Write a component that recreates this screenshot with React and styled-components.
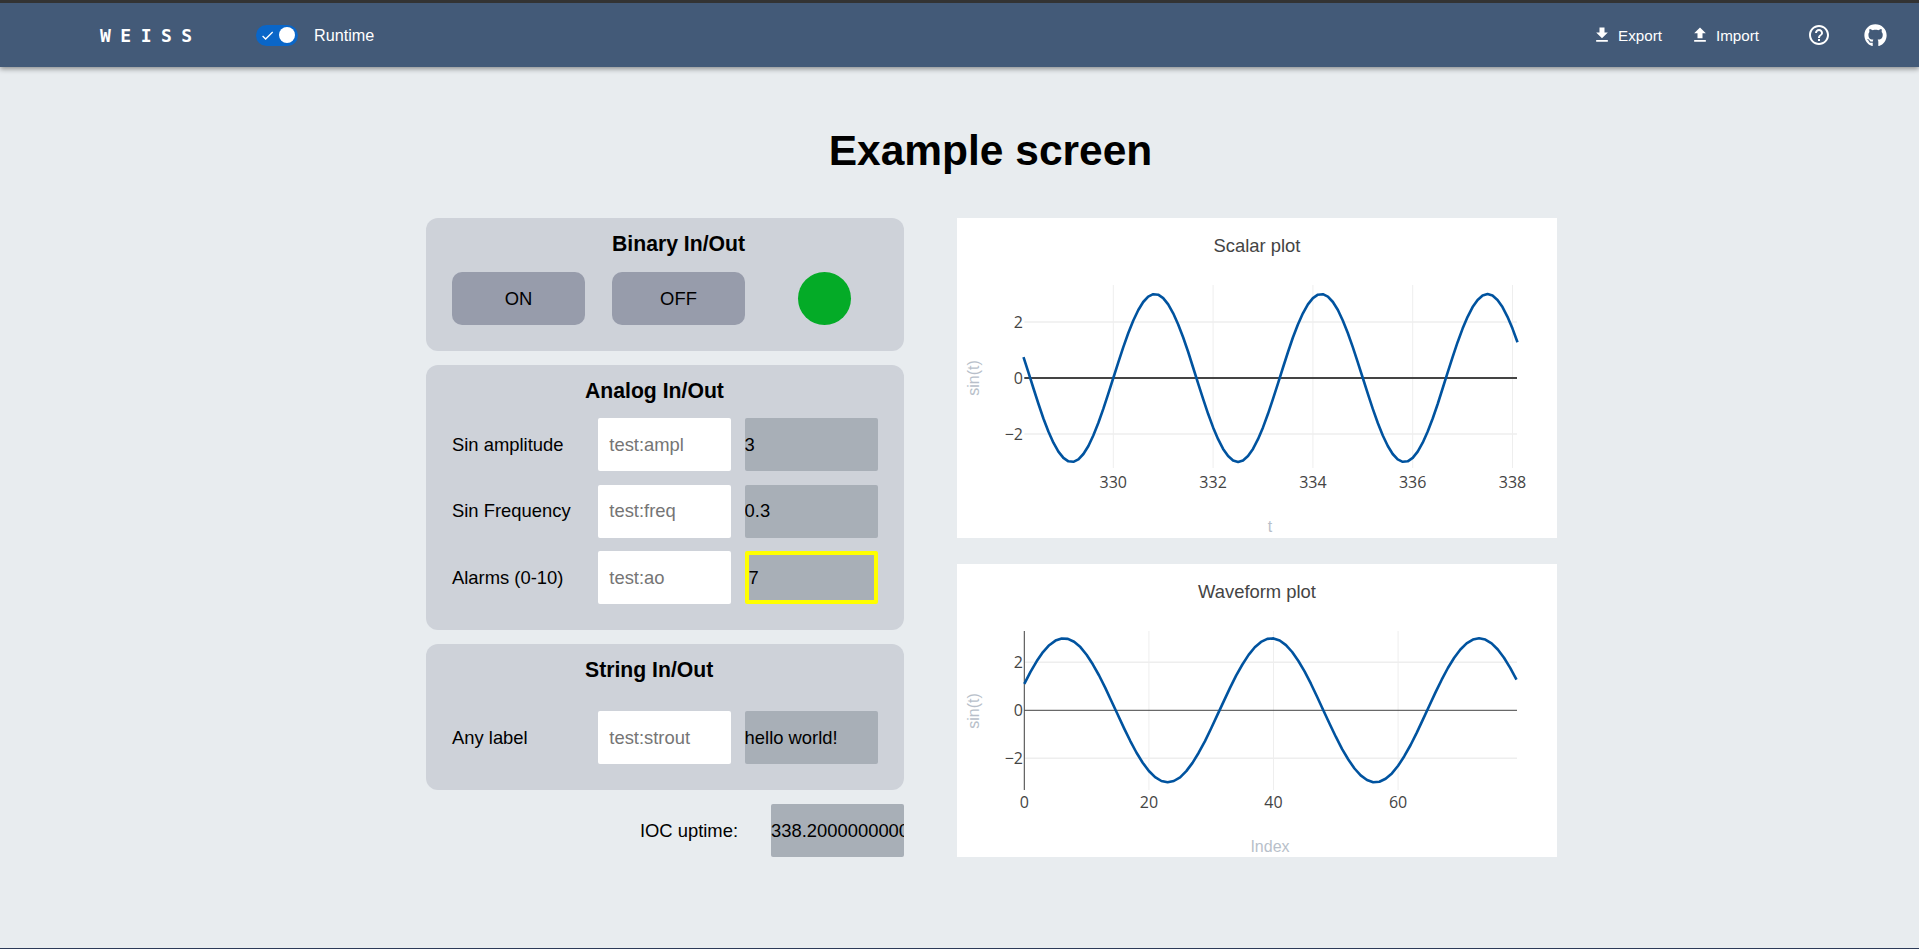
import React from 'react'
import styled, { createGlobalStyle } from 'styled-components'
import { MdFileDownload, MdFileUpload, MdHelpOutline, MdCheck } from 'react-icons/md'
import { FaGithub } from 'react-icons/fa'

const GlobalStyle = createGlobalStyle`
    html, body {
        margin: 0;
        padding: 0;
        background: #e8ecef;
        font-family: "Liberation Sans", Arial, sans-serif;
        color: #000;
    }
`;

const Page = styled.div`
    box-sizing: border-box;
    height: 949px;
    overflow: hidden;
    border-bottom: 1px solid #2c3a58;
`;

const Header = styled.header`
    box-sizing: border-box;
    height: 67px;
    border-top: 3px solid #333;
    background: #435a78;
    box-shadow: 0 2px 5px rgba(0, 0, 0, 0.4);
    color: #fff;
    display: flex;
    align-items: center;
    padding: 0 32px 0 100px;
`;

const Logo = styled.span`
    font-family: "DejaVu Sans Mono", monospace;
    font-weight: 700;
    font-size: 18px;
    letter-spacing: 9.5px;
    width: 156px;
`;

const Toggle = styled.span`
    position: relative;
    width: 42px;
    height: 21px;
    border-radius: 11px;
    background: #0a66c8;
    margin-right: 16px;
    display: flex;
    align-items: center;
    padding-left: 4px;
    box-sizing: border-box;
    font-size: 14px;

    &::after {
        content: '';
        position: absolute;
        right: 3px;
        top: 2.5px;
        width: 16px;
        height: 16px;
        border-radius: 50%;
        background: #fff;
    }
`;

const RunLabel = styled.span`
    font-size: 16.2px;
`;

const Spacer = styled.div`
    flex: 1;
`;

const Action = styled.span`
    display: flex;
    align-items: center;
    gap: 6px;
    font-size: 15.2px;
    margin-right: ${({ $gap }) => $gap}px;
`;

const HelpIcon = styled(MdHelpOutline)`
    margin-right: 33px;
`;

const Main = styled.main`
    padding-left: 426px;
`;

const Title = styled.h1`
    box-sizing: border-box;
    width: 1129px;
    margin: 0;
    height: 151px;
    padding-top: 17px;
    display: flex;
    align-items: center;
    justify-content: center;
    font-size: 42.5px;
    font-weight: 700;
`;

const Columns = styled.div`
    display: flex;
    gap: 53px;
    align-items: flex-start;
`;

const LeftColumn = styled.div`
    width: 478px;
    display: flex;
    flex-direction: column;
    gap: 14px;
`;

const RightColumn = styled.div`
    width: 600px;
    display: flex;
    flex-direction: column;
    gap: 26px;
`;

const Panel = styled.section`
    box-sizing: border-box;
    background: #ced2d9;
    border-radius: 12px;
    padding: 14px 26px 26px;
`;

const PanelTitle = styled.h3`
    margin: 0 0 ${({ $gap }) => $gap}px ${({ $left }) => $left}px;
    font-size: 21.2px;
    line-height: 24px;
    font-weight: 700;
`;

const ButtonRow = styled.div`
    display: flex;
    gap: 27px;
`;

const PushButton = styled.button`
    width: 133px;
    height: 53px;
    border: none;
    border-radius: 10px;
    background: #979cab;
    font-family: inherit;
    font-size: 18.4px;
    color: #000;
`;

const Led = styled.div`
    width: 53px;
    height: 53px;
    border-radius: 50%;
    background: #04ab27;
    margin-left: 26px;
`;

const FieldGrid = styled.div`
    display: grid;
    grid-template-columns: 133px 133px 133px;
    column-gap: 13.3px;
    row-gap: 13.5px;
    align-items: center;
`;

const FieldLabel = styled.span`
    font-size: 18.4px;
    white-space: nowrap;
`;

const PvInput = styled.input`
    box-sizing: border-box;
    width: 133px;
    height: 53px;
    border: none;
    border-radius: 2px;
    background: #fff;
    padding: 0 11px;
    font-family: inherit;
    font-size: 18.4px;
`;

const Readback = styled.div`
    box-sizing: border-box;
    width: 133px;
    height: 53px;
    border-radius: 2px;
    background: #a8afb7;
    border: ${({ $alarm }) => ($alarm ? '4px solid #ffff00' : 'none')};
    display: flex;
    align-items: center;
    font-size: 18.4px;
    white-space: nowrap;
    overflow: hidden;
`;

const UptimeRow = styled.div`
    display: flex;
    justify-content: flex-end;
    align-items: center;
    gap: 33px;
`;

const PlotCard = styled.div`
    background: #fff;
    height: ${({ $h }) => $h}px;
`;

const PlotSvg = styled.svg`
    display: block;
`;

const PlotTitle = styled.text`
    font-family: "Liberation Sans", Arial, sans-serif;
    font-size: 18.4px;
    fill: #444;
    text-anchor: middle;
`;

const TickText = styled.text`
    font-family: "Open Sans", sans-serif;
    font-size: 16px;
    fill: #444;
    text-anchor: ${({ $end }) => ($end ? 'end' : 'middle')};
`;

const AxisText = styled.text`
    font-family: "Liberation Sans", Arial, sans-serif;
    font-size: 16px;
    fill: #b8bfca;
    text-anchor: middle;
`;

const range = (from, to, step) => {
    const out = [];
    for (let v = from; v <= to + 1e-6; v += step) out.push(v);
    return out;
};

const scalarData = range(328.2, 338.1, 0.1).map((t) => [t, 3 * Math.sin(2 * Math.PI * 0.3 * (t - 330))]);
const waveData = range(0, 79, 1).map((i) => [i, 3 * Math.sin((2 * Math.PI / 33.33) * i + 0.375)]);

const Plot = ({ title, xLabel, height, data, xAt, yAt, xTicks, yTicks, top, bottom, tickY, xLabelY, yLabelY, zeroWidth, leftAxis }) => {
    const pathD = data.map(([x, y], i) => `${i ? 'L' : 'M'}${xAt(x).toFixed(1)} ${yAt(y).toFixed(1)}`).join(' ');
    return (
        <PlotCard $h={height}>
            <PlotSvg width="600" height={height}>
                <PlotTitle x="300" y="33.5">{title}</PlotTitle>
                {xTicks.map((t) => (
                    <line key={t} x1={xAt(t)} x2={xAt(t)} y1={top} y2={bottom} stroke="#eee" />
                ))}
                {yTicks.filter((v) => v !== 0).map((v) => (
                    <line key={v} x1="67.3" x2="560" y1={yAt(v)} y2={yAt(v)} stroke="#eee" strokeWidth="1.4" />
                ))}
                <line x1="67.3" x2="560" y1={yAt(0)} y2={yAt(0)} stroke="#444" strokeWidth={zeroWidth} />
                {leftAxis && <line x1="67.3" x2="67.3" y1={top} y2={bottom} stroke="#444" />}
                <path d={pathD} fill="none" stroke="#00539f" strokeWidth="2.6" strokeLinejoin="round" />
                {xTicks.map((t) => (
                    <TickText key={t} x={xAt(t)} y={tickY}>{t}</TickText>
                ))}
                {yTicks.map((v) => (
                    <TickText key={v} $end x="66" y={yAt(v) + 5.5}>{v < 0 ? `\u2212${-v}` : v}</TickText>
                ))}
                <AxisText x="313" y={xLabelY}>{xLabel}</AxisText>
                <AxisText transform={`translate(22 ${yLabelY}) rotate(-90)`}>sin(t)</AxisText>
            </PlotSvg>
        </PlotCard>
    );
};

const App = () => {
    return (
        <Page>
            <GlobalStyle />
            <Header>
                <Logo>WEISS</Logo>
                <Toggle><MdCheck size={15} /></Toggle>
                <RunLabel>Runtime</RunLabel>
                <Spacer />
                <Action $gap={28}><MdFileDownload size={20} />Export</Action>
                <Action $gap={48}><MdFileUpload size={20} />Import</Action>
                <HelpIcon size={24} />
                <FaGithub size={23} />
            </Header>
            <Main>
                <Title>Example screen</Title>
                <Columns>
                    <LeftColumn>
                        <Panel>
                            <PanelTitle $left={160} $gap={16}>Binary In/Out</PanelTitle>
                            <ButtonRow>
                                <PushButton>ON</PushButton>
                                <PushButton>OFF</PushButton>
                                <Led />
                            </ButtonRow>
                        </Panel>
                        <Panel>
                            <PanelTitle $left={133} $gap={15}>Analog In/Out</PanelTitle>
                            <FieldGrid>
                                <FieldLabel>Sin amplitude</FieldLabel>
                                <PvInput placeholder="test:ampl" />
                                <Readback>3</Readback>
                                <FieldLabel>Sin Frequency</FieldLabel>
                                <PvInput placeholder="test:freq" />
                                <Readback>0.3</Readback>
                                <FieldLabel>Alarms (0-10)</FieldLabel>
                                <PvInput placeholder="test:ao" />
                                <Readback $alarm>7</Readback>
                            </FieldGrid>
                        </Panel>
                        <Panel>
                            <PanelTitle $left={133} $gap={29}>String In/Out</PanelTitle>
                            <FieldGrid>
                                <FieldLabel>Any label</FieldLabel>
                                <PvInput placeholder="test:strout" />
                                <Readback>hello world!</Readback>
                            </FieldGrid>
                        </Panel>
                        <UptimeRow>
                            <FieldLabel>IOC uptime:</FieldLabel>
                            <Readback>338.20000000000005</Readback>
                        </UptimeRow>
                    </LeftColumn>
                    <RightColumn>
                        <Plot
                            title="Scalar plot"
                            xLabel="t"
                            height={320}
                            data={scalarData}
                            xAt={(t) => 156.3 + (t - 330) * 49.9}
                            yAt={(v) => 160 - 28 * v}
                            xTicks={[330, 332, 334, 336, 338]}
                            yTicks={[2, 0, -2]}
                            top={67}
                            bottom={250}
                            tickY={270}
                            xLabelY={314}
                            yLabelY={160}
                            zeroWidth={2}
                        />
                        <Plot
                            title="Waveform plot"
                            xLabel="Index"
                            height={293}
                            data={waveData}
                            xAt={(i) => 67.3 + 6.23 * i}
                            yAt={(v) => 146.3 - 24 * v}
                            xTicks={[0, 20, 40, 60]}
                            yTicks={[2, 0, -2]}
                            top={67}
                            bottom={226}
                            tickY={243.5}
                            xLabelY={288}
                            yLabelY={147}
                            zeroWidth={1}
                            leftAxis
                        />
                    </RightColumn>
                </Columns>
            </Main>
        </Page>
    );
};

export default App
